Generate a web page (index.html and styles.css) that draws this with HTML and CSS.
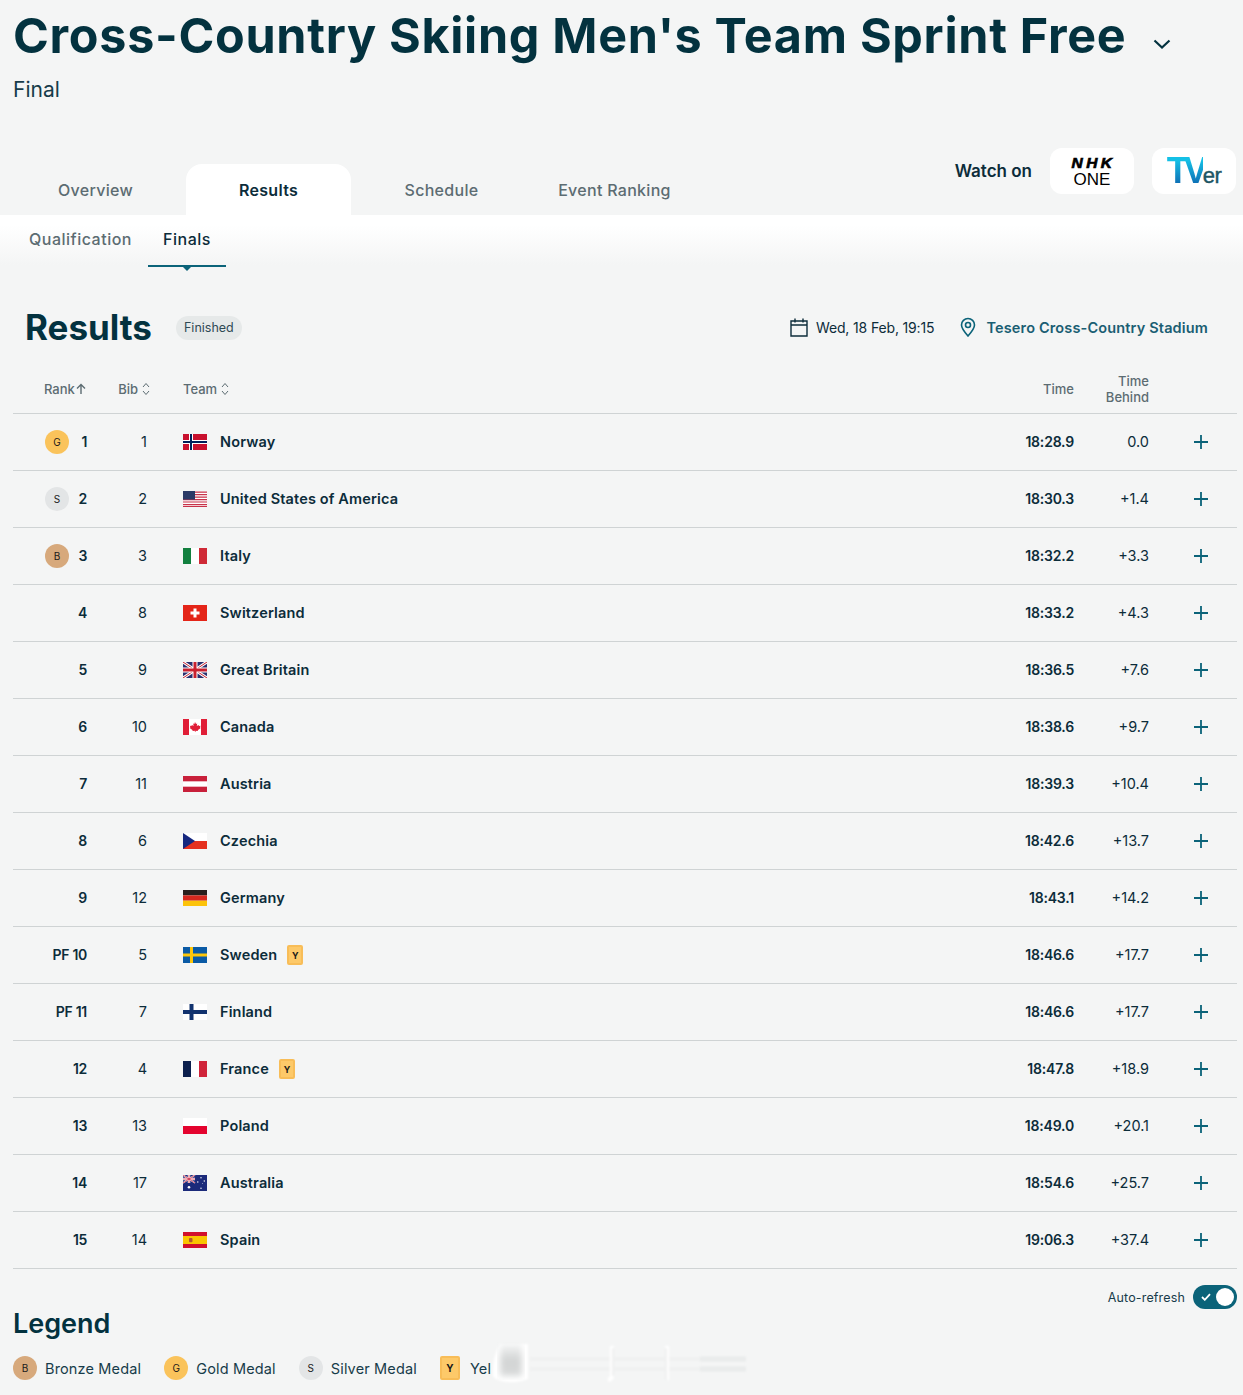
FILE: index.html
```html
<!DOCTYPE html>
<html>
<head>
<meta charset="utf-8">
<title>Cross-Country Skiing Men's Team Sprint Free</title>
<link rel="stylesheet" href="styles.css">
</head>
<body>

<header class="event-head">
  <div class="title-row">
    <h1>Cross-Country Skiing Men's Team Sprint Free</h1>
    <svg class="caret" viewBox="0 0 18 10"><path d="M1.5 1.5 9 8.5l7.5-7"/></svg>
  </div>
  <div class="phase">Final</div>
</header>

<div class="tabs-row">
  <nav class="tabs">
    <a class="tab">Overview</a>
    <a class="tab active">Results</a>
    <a class="tab">Schedule</a>
    <a class="tab">Event Ranking</a>
  </nav>
  <div class="watch">
    <span class="watch-label">Watch on</span>
    <a class="broadcaster nhk"><b>NHK</b><span>ONE</span></a>
    <a class="broadcaster tver"><span class="tv">TV</span><span class="er">er</span></a>
  </div>
</div>

<div class="subtabs-wrap">
  <nav class="subtabs">
    <a class="subtab">Qualification</a>
    <a class="subtab active">Finals</a>
  </nav>
</div>

<section class="results">
  <div class="results-head">
    <h2>Results</h2>
    <span class="badge">Finished</span>
    <div class="meta">
      <svg class="cal" viewBox="0 0 18 20"><path d="M1 4h16v15H1zM1 8h16M5 1.500v4M13 1.500v4"/></svg>
      <span class="date">Wed, 18 Feb, 19:15</span>
      <svg class="pin" viewBox="0 0 16 20"><path d="M8 19C4 14.500 1.500 11.500 1.500 8a6.500 6.500 0 0 1 13 0c0 3.500-2.500 6.500-6.500 11z"/><circle cx="8" cy="8" r="2.500"/></svg>
      <a class="venue">Tesero Cross-Country Stadium</a>
    </div>
  </div>

  <div class="row row-head">
    <div class="c-rank"><span class="th-rank">Rank<svg class="sort-up" viewBox="0 0 10 12"><path d="M5 11V1.500M1 5.500l4-4 4 4"/></svg></span></div>
    <div class="c-bib">Bib<svg class="sort" viewBox="0 0 8 14"><path d="M1 5l3-3.500L7 5M1 9l3 3.500L7 9"/></svg></div>
    <div class="c-team">Team<svg class="sort" viewBox="0 0 8 14"><path d="M1 5l3-3.500L7 5M1 9l3 3.500L7 9"/></svg></div>
    <div class="c-time">Time</div>
    <div class="c-behind">Time<br>Behind</div>
    <div class="c-more"></div>
  </div>

  <div class="row">
    <div class="c-rank"><span class="medal gold">G</span><span class="num">1</span></div>
    <div class="c-bib">1</div>
    <div class="c-team">
      <svg class="flag" viewBox="0 0 24 16"><rect width="24" height="16" fill="#c8102e"/><path d="M8 0v16M0 8h24" stroke="#fff" stroke-width="4"/><path d="M8 0v16M0 8h24" stroke="#00205b" stroke-width="2"/></svg>
      <span class="name">Norway</span>
    </div>
    <div class="c-time">18:28.9</div>
    <div class="c-behind">0.0</div>
    <div class="c-more"><svg class="plus" viewBox="0 0 16 16"><path d="M8 1v14M1 8h14"/></svg></div>
  </div>

  <div class="row">
    <div class="c-rank"><span class="medal silver">S</span><span class="num">2</span></div>
    <div class="c-bib">2</div>
    <div class="c-team">
      <svg class="flag" viewBox="0 0 24 16"><rect width="24" height="16" fill="#fff"/><path d="M0 1.200h24M0 3.700h24M0 6.100h24M0 8.600h24M0 11h24M0 13.500h24M0 15.400h24" stroke="#c8324a" stroke-width="1.200"/><rect width="12" height="8.600" fill="#2b3a67"/></svg>
      <span class="name">United States of America</span>
    </div>
    <div class="c-time">18:30.3</div>
    <div class="c-behind">+1.4</div>
    <div class="c-more"><svg class="plus" viewBox="0 0 16 16"><path d="M8 1v14M1 8h14"/></svg></div>
  </div>

  <div class="row">
    <div class="c-rank"><span class="medal bronze">B</span><span class="num">3</span></div>
    <div class="c-bib">3</div>
    <div class="c-team">
      <svg class="flag" viewBox="0 0 24 16"><rect width="8" height="16" fill="#12803f"/><rect x="8" width="8" height="16" fill="#fff"/><rect x="16" width="8" height="16" fill="#cf2a36"/></svg>
      <span class="name">Italy</span>
    </div>
    <div class="c-time">18:32.2</div>
    <div class="c-behind">+3.3</div>
    <div class="c-more"><svg class="plus" viewBox="0 0 16 16"><path d="M8 1v14M1 8h14"/></svg></div>
  </div>

  <div class="row">
    <div class="c-rank"><span class="num">4</span></div>
    <div class="c-bib">8</div>
    <div class="c-team">
      <svg class="flag" viewBox="0 0 24 16"><rect width="24" height="16" fill="#e42518"/><path d="M12 3.500v9M7.500 8h9" stroke="#fff" stroke-width="3"/></svg>
      <span class="name">Switzerland</span>
    </div>
    <div class="c-time">18:33.2</div>
    <div class="c-behind">+4.3</div>
    <div class="c-more"><svg class="plus" viewBox="0 0 16 16"><path d="M8 1v14M1 8h14"/></svg></div>
  </div>

  <div class="row">
    <div class="c-rank"><span class="num">5</span></div>
    <div class="c-bib">9</div>
    <div class="c-team">
      <svg class="flag" viewBox="0 0 24 16"><rect width="24" height="16" fill="#2a2f6e"/><path d="M0 0l24 16M24 0L0 16" stroke="#fff" stroke-width="3"/><path d="M0 0l24 16M24 0L0 16" stroke="#c8202f" stroke-width="1"/><path d="M12 0v16M0 8h24" stroke="#fff" stroke-width="5"/><path d="M12 0v16M0 8h24" stroke="#c8202f" stroke-width="3"/></svg>
      <span class="name">Great Britain</span>
    </div>
    <div class="c-time">18:36.5</div>
    <div class="c-behind">+7.6</div>
    <div class="c-more"><svg class="plus" viewBox="0 0 16 16"><path d="M8 1v14M1 8h14"/></svg></div>
  </div>

  <div class="row">
    <div class="c-rank"><span class="num">6</span></div>
    <div class="c-bib">10</div>
    <div class="c-team">
      <svg class="flag" viewBox="0 0 24 16"><rect width="24" height="16" fill="#fff"/><rect width="6" height="16" fill="#e01e37"/><rect x="18" width="6" height="16" fill="#e01e37"/><path d="M12 3l1 2 1.200-.500-.400 2.500 1.700-1 .500 1 1.500-.200-.500 1.700.700.500-2.700 2-.300 1-2.200-.300V13h-.600v-1.300l-2.200.300-.300-1-2.700-2 .700-.500-.500-1.700 1.500.200.500-1 1.700 1-.400-2.500 1.200.500z" fill="#e01e37"/></svg>
      <span class="name">Canada</span>
    </div>
    <div class="c-time">18:38.6</div>
    <div class="c-behind">+9.7</div>
    <div class="c-more"><svg class="plus" viewBox="0 0 16 16"><path d="M8 1v14M1 8h14"/></svg></div>
  </div>

  <div class="row">
    <div class="c-rank"><span class="num">7</span></div>
    <div class="c-bib">11</div>
    <div class="c-team">
      <svg class="flag" viewBox="0 0 24 16"><rect width="24" height="16" fill="#c8203a"/><rect y="5.330" width="24" height="5.340" fill="#fff"/></svg>
      <span class="name">Austria</span>
    </div>
    <div class="c-time">18:39.3</div>
    <div class="c-behind">+10.4</div>
    <div class="c-more"><svg class="plus" viewBox="0 0 16 16"><path d="M8 1v14M1 8h14"/></svg></div>
  </div>

  <div class="row">
    <div class="c-rank"><span class="num">8</span></div>
    <div class="c-bib">6</div>
    <div class="c-team">
      <svg class="flag" viewBox="0 0 24 16"><rect width="24" height="8" fill="#fff"/><rect y="8" width="24" height="8" fill="#e5301f"/><path d="M0 0l12 8L0 16z" fill="#15277f"/></svg>
      <span class="name">Czechia</span>
    </div>
    <div class="c-time">18:42.6</div>
    <div class="c-behind">+13.7</div>
    <div class="c-more"><svg class="plus" viewBox="0 0 16 16"><path d="M8 1v14M1 8h14"/></svg></div>
  </div>

  <div class="row">
    <div class="c-rank"><span class="num">9</span></div>
    <div class="c-bib">12</div>
    <div class="c-team">
      <svg class="flag" viewBox="0 0 24 16"><rect width="24" height="5.400" fill="#2a1f1c"/><rect y="5.400" width="24" height="5.300" fill="#d6281e"/><rect y="10.700" width="24" height="5.300" fill="#fcc30b"/></svg>
      <span class="name">Germany</span>
    </div>
    <div class="c-time">18:43.1</div>
    <div class="c-behind">+14.2</div>
    <div class="c-more"><svg class="plus" viewBox="0 0 16 16"><path d="M8 1v14M1 8h14"/></svg></div>
  </div>

  <div class="row">
    <div class="c-rank"><span class="num">PF 10</span></div>
    <div class="c-bib">5</div>
    <div class="c-team">
      <svg class="flag" viewBox="0 0 24 16"><rect width="24" height="16" fill="#0a5aa5"/><path d="M8.500 0v16M0 8h24" stroke="#fdc60a" stroke-width="3"/></svg>
      <span class="name">Sweden</span>
      <span class="card">Y</span>
    </div>
    <div class="c-time">18:46.6</div>
    <div class="c-behind">+17.7</div>
    <div class="c-more"><svg class="plus" viewBox="0 0 16 16"><path d="M8 1v14M1 8h14"/></svg></div>
  </div>

  <div class="row">
    <div class="c-rank"><span class="num">PF 11</span></div>
    <div class="c-bib">7</div>
    <div class="c-team">
      <svg class="flag" viewBox="0 0 24 16"><rect width="24" height="16" fill="#fff"/><path d="M8.500 0v16M0 8h24" stroke="#12336f" stroke-width="4"/></svg>
      <span class="name">Finland</span>
    </div>
    <div class="c-time">18:46.6</div>
    <div class="c-behind">+17.7</div>
    <div class="c-more"><svg class="plus" viewBox="0 0 16 16"><path d="M8 1v14M1 8h14"/></svg></div>
  </div>

  <div class="row">
    <div class="c-rank"><span class="num">12</span></div>
    <div class="c-bib">4</div>
    <div class="c-team">
      <svg class="flag" viewBox="0 0 24 16"><rect width="8" height="16" fill="#0c1f4d"/><rect x="8" width="8" height="16" fill="#fff"/><rect x="16" width="8" height="16" fill="#d0243a"/></svg>
      <span class="name">France</span>
      <span class="card">Y</span>
    </div>
    <div class="c-time">18:47.8</div>
    <div class="c-behind">+18.9</div>
    <div class="c-more"><svg class="plus" viewBox="0 0 16 16"><path d="M8 1v14M1 8h14"/></svg></div>
  </div>

  <div class="row">
    <div class="c-rank"><span class="num">13</span></div>
    <div class="c-bib">13</div>
    <div class="c-team">
      <svg class="flag" viewBox="0 0 24 16"><rect width="24" height="8" fill="#fff"/><rect y="8" width="24" height="8" fill="#e4032e"/></svg>
      <span class="name">Poland</span>
    </div>
    <div class="c-time">18:49.0</div>
    <div class="c-behind">+20.1</div>
    <div class="c-more"><svg class="plus" viewBox="0 0 16 16"><path d="M8 1v14M1 8h14"/></svg></div>
  </div>

  <div class="row">
    <div class="c-rank"><span class="num">14</span></div>
    <div class="c-bib">17</div>
    <div class="c-team">
      <svg class="flag" viewBox="0 0 24 16"><rect width="24" height="16" fill="#1b2a7a"/><path d="M0 0l12 8M12 0L0 8" stroke="#fff" stroke-width="1.500"/><path d="M6 0v8M0 4h12" stroke="#fff" stroke-width="2.500"/><path d="M6 0v8M0 4h12M0 0l12 8M12 0L0 8" stroke="#d0304a" stroke-width=".8"/><circle cx="6" cy="12.300" r="1.300" fill="#fff"/><circle cx="18" cy="2.800" r=".7" fill="#fff"/><circle cx="18" cy="13.300" r=".7" fill="#fff"/><circle cx="14.800" cy="7" r=".7" fill="#fff"/><circle cx="21.300" cy="6" r=".7" fill="#fff"/><circle cx="19.600" cy="8.500" r=".4" fill="#fff"/></svg>
      <span class="name">Australia</span>
    </div>
    <div class="c-time">18:54.6</div>
    <div class="c-behind">+25.7</div>
    <div class="c-more"><svg class="plus" viewBox="0 0 16 16"><path d="M8 1v14M1 8h14"/></svg></div>
  </div>

  <div class="row">
    <div class="c-rank"><span class="num">15</span></div>
    <div class="c-bib">14</div>
    <div class="c-team">
      <svg class="flag" viewBox="0 0 24 16"><rect width="24" height="16" fill="#d2102c"/><rect y="4" width="24" height="8" fill="#fac400"/><rect x="6" y="6" width="3.500" height="4.200" rx="1" fill="#b5562a"/></svg>
      <span class="name">Spain</span>
    </div>
    <div class="c-time">19:06.3</div>
    <div class="c-behind">+37.4</div>
    <div class="c-more"><svg class="plus" viewBox="0 0 16 16"><path d="M8 1v14M1 8h14"/></svg></div>
  </div>

  <div class="refresh">
    <span>Auto-refresh</span>
    <span class="toggle">
      <svg class="check" viewBox="0 0 10 8"><path d="M1 4l2.800 2.800L9 1.200"/></svg>
      <span class="knob"></span>
    </span>
  </div>
</section>

<footer class="legend">
  <h3>Legend</h3>
  <div class="legend-items">
    <div class="legend-item"><span class="medal bronze">B</span>Bronze Medal</div>
    <div class="legend-item"><span class="medal gold">G</span>Gold Medal</div>
    <div class="legend-item"><span class="medal silver">S</span>Silver Medal</div>
    <div class="legend-item"><span class="card big">Y</span>Yel</div>
  </div>
  <svg class="smudge" viewBox="0 0 270 44">
    <defs>
      <filter id="soft"><feGaussianBlur stdDeviation="1"/></filter>
      <filter id="softer"><feGaussianBlur stdDeviation="3"/></filter>
      <linearGradient id="fade" x1="0" y1="0" x2="0" y2="1">
        <stop offset="0" stop-color="#f4f5f5"/>
        <stop offset=".5" stop-color="#d2d4d4"/>
        <stop offset="1" stop-color="#d8dada"/>
      </linearGradient>
    </defs>
    <path d="M3 28v6c4 7 24 8 35 3V2L10 2C5 10 3 20 3 28z" fill="#fff" filter="url(#soft)"/>
    <rect x="10" y="2" width="22" height="32" fill="url(#fade)" filter="url(#softer)"/>
    <g filter="url(#soft)">
      <path d="M40 17h170M40 27h170" stroke="#f0f1f1" stroke-width="4"/>
      <path d="M210 17h46M210 27h46" stroke="#e9ebeb" stroke-width="5"/>
      <path d="M122 4v30q0 3-4 4" fill="none" stroke="#fff" stroke-width="4"/>
      <path d="M123 6v28" stroke="#dfe1e1" stroke-width="1"/>
      <path d="M177 4v34" stroke="#fff" stroke-width="4"/>
      <path d="M176 6v32" stroke="#dfe1e1" stroke-width="1"/>
    </g>
  </svg>
</footer>

</body>
</html>
```

FILE: styles.css
```css
* {
  box-sizing: border-box;
}

body {
  margin: 0;
  background: #f4f5f5;
  color: #0c2c3a;
  font-family: Inter, "Liberation Sans", sans-serif;
  font-size: 14.5px;
  height: 1395px;
  overflow: hidden;
}

/* Event title */
.event-head {
  padding: 8px 13px 0;
}

.title-row {
  display: flex;
  align-items: center;
}

h1 {
  margin: 0;
  font-size: 48.5px;
  font-weight: 700;
  line-height: 56px;
  color: #03323f;
  letter-spacing: 0.7px;
  white-space: nowrap;
}

.caret {
  width: 18px;
  height: 10px;
  margin: 16px 0 0 27px;
  fill: none;
  stroke: #03323f;
  stroke-width: 2.2;
}

.phase {
  margin-top: 12px;
  font-size: 21px;
  line-height: 28px;
  color: #173c4a;
}

/* Main tabs */
.tabs-row {
  display: flex;
  justify-content: space-between;
  align-items: flex-start;
  padding: 0 7px 0 13px;
  height: 67px;
  margin-top: 44px;
}

.tabs {
  display: flex;
  gap: 8px;
  margin-top: 16px;
}

.tab {
  width: 165px;
  height: 51px;
  display: flex;
  align-items: center;
  justify-content: center;
  padding-top: 1px;
  font-size: 16px;
  font-weight: 500;
  letter-spacing: 0.3px;
  color: #5c6c72;
  border-radius: 16px 16px 0 0;
}

.tab.active {
  background: #fff;
  color: #0c2c3a;
  font-weight: 600;
}

.watch {
  display: flex;
  align-items: center;
  gap: 18px;
}

.watch-label {
  font-size: 17px;
  font-weight: 600;
  color: #0c2c3a;
}

.broadcaster {
  width: 84px;
  height: 46px;
  background: #fff;
  border-radius: 12px;
  display: flex;
  flex-direction: column;
  align-items: center;
  justify-content: center;
  color: #000;
  font-family: "Liberation Sans", sans-serif;
}

.nhk b {
  font-size: 15.5px;
  line-height: 15px;
  font-style: italic;
  font-weight: 700;
  letter-spacing: 3.5px;
  margin-right: -3px;
  -webkit-text-stroke: 0.7px #000;
}

.nhk span {
  margin-top: 1px;
  font-size: 17px;
  line-height: 17px;
}

.tver {
  flex-direction: row;
  align-items: baseline;
  padding-top: 5px;
}

.tv {
  font-size: 36px;
  line-height: 36px;
  font-weight: 700;
  letter-spacing: -5px;
  background: linear-gradient(#14c0e6 20%, #0e6fb5 85%);
  -webkit-background-clip: text;
  background-clip: text;
  color: transparent;
}

.er {
  margin-left: 0;
  font-size: 22px;
  color: #1d5564;
  letter-spacing: -0.5px;
  -webkit-text-stroke: 0.4px #1d5564;
}

/* Sub tabs */
.subtabs-wrap {
  height: 53px;
  background: linear-gradient(#fff 10px, #f4f5f5 50px);
}

.subtabs {
  display: flex;
  padding-left: 13px;
}

.subtab {
  position: relative;
  height: 52px;
  display: flex;
  align-items: center;
  padding: 0 16px 2px;
  border-bottom: 2px solid transparent;
  font-size: 16px;
  font-weight: 500;
  letter-spacing: 0.5px;
  color: #5c6c72;
}

.subtab.active {
  color: #0c2c3a;
  width: 78px;
  justify-content: center;
  border-bottom-color: #0b6379;
}

.subtab.active::after {
  content: "";
  position: absolute;
  left: 50%;
  bottom: -6px;
  margin-left: -4px;
  border: 4px solid transparent;
  border-top: 4px solid #0b6379;
  border-bottom: 0;
}

/* Results */
.results {
  padding: 0 6px 0 13px;
}

.results-head {
  display: flex;
  align-items: center;
  height: 80px;
  margin-top: 20px;
  padding: 0 29px 0 12px;
}

h2 {
  margin: 0 0 2px;
  font-size: 35px;
  font-weight: 700;
  color: #03323f;
  line-height: 40px;
}

.badge {
  margin-left: 24px;
  padding: 0 8px;
  height: 24px;
  line-height: 24px;
  border-radius: 12px;
  background: #e6e9e9;
  font-size: 12.5px;
  color: #2f4a55;
}

.meta {
  margin-left: auto;
  margin-bottom: 2px;
  display: flex;
  align-items: center;
}

.cal {
  width: 18px;
  height: 20px;
  fill: none;
  stroke: #0c2c3a;
  stroke-width: 1.4;
}

.date {
  margin-left: 8px;
  font-size: 14px;
  letter-spacing: -0.15px;
  color: #0c2c3a;
}

.pin {
  width: 16px;
  height: 20px;
  margin-left: 26px;
  fill: none;
  stroke: #0b6379;
  stroke-width: 1.6;
}

.venue {
  margin-left: 10px;
  font-size: 14.5px;
  font-weight: 600;
  letter-spacing: 0.15px;
  color: #1a5e73;
}

/* Table rows */
.row {
  display: grid;
  grid-template-columns: 74px 60px 1fr 75px 75px 88px;
  align-items: center;
  height: 57px;
  border-bottom: 1px solid #cfd3d4;
  font-weight: 500;
}

.row-head {
  height: 46px;
  padding-bottom: 2px;
  font-size: 13px;
  line-height: 16px;
  color: #5c6c72;
}

.row-head > div {
  margin-bottom: 2px;
}

/* text sits a pixel above the flag and plus centre */
.num,
.name,
.c-bib,
.c-time,
.c-behind {
  margin-bottom: 2px;
}

.c-rank {
  display: flex;
  align-items: center;
  justify-content: flex-end;
  position: relative;
  font-size: 14px;
  font-weight: 600;
  letter-spacing: -0.3px;
}

.row-head .c-rank {
  justify-content: flex-start;
  padding-left: 31px;
  font-size: 13px;
  font-weight: 500;
  letter-spacing: 0;
}

.th-rank {
  display: flex;
  align-items: center;
}

.c-rank .medal {
  position: absolute;
  left: 32px;
}

.c-bib {
  text-align: right;
  font-weight: 400;
}

.row-head .c-bib {
  display: flex;
  align-items: center;
  justify-content: flex-end;
  margin-right: -3px;
  font-weight: 500;
}

.c-team {
  display: flex;
  align-items: center;
  padding-left: 36px;
  font-weight: 600;
  letter-spacing: 0.15px;
}

.row-head .c-team {
  font-weight: 500;
  letter-spacing: 0;
}

.flag {
  width: 24px;
  height: 16px;
  margin-right: 13px;
  flex: none;
}

.c-time,
.c-behind {
  text-align: right;
}

.c-time {
  font-size: 14px;
  font-weight: 600;
  letter-spacing: -0.2px;
}

.row-head .c-time {
  font-size: 13px;
  font-weight: 500;
  letter-spacing: 0;
}

.c-behind {
  font-weight: 400;
}

.row-head .c-behind {
  font-weight: 500;
}

.c-more {
  padding-left: 44px;
  display: flex;
}

.plus {
  width: 16px;
  height: 16px;
  fill: none;
  stroke: #0b6379;
  stroke-width: 1.8;
}

.sort-up {
  width: 10px;
  height: 12px;
  margin-left: 1px;
  fill: none;
  stroke: #5c6c72;
  stroke-width: 1.4;
}

.sort {
  width: 8px;
  height: 14px;
  margin-left: 4px;
  fill: none;
  stroke: #5c6c72;
  stroke-width: 1;
}

.medal {
  width: 24px;
  height: 24px;
  border-radius: 50%;
  display: inline-flex;
  align-items: center;
  justify-content: center;
  font-size: 10px;
  font-weight: 400;
  letter-spacing: 0;
  color: #1a1a1a;
  flex: none;
}

.gold {
  background: #fac35b;
}

.silver {
  background: #e3e5e6;
}

.bronze {
  background: #d7a97c;
}

.card {
  width: 16px;
  height: 20px;
  margin-left: 10px;
  border: 2px solid #f8bd58;
  border-radius: 2px;
  background: #fdc969;
  display: inline-flex;
  align-items: center;
  justify-content: center;
  font-size: 9px;
  font-weight: 700;
  letter-spacing: 0;
  color: #1a1a1a;
}

.card.big {
  width: 20px;
  height: 24px;
  margin-left: 0;
  margin-right: 2px;
  font-size: 10px;
}

/* Auto refresh */
.refresh {
  display: flex;
  align-items: center;
  justify-content: flex-end;
  gap: 8px;
  margin-top: 16px;
  height: 24px;
  font-size: 12.5px;
  letter-spacing: 0.15px;
  color: #173c4a;
}

.toggle {
  position: relative;
  width: 44px;
  height: 24px;
  border-radius: 12px;
  background: #0b6379;
}

.knob {
  position: absolute;
  right: 3px;
  top: 3px;
  width: 18px;
  height: 18px;
  border-radius: 50%;
  background: #fff;
}

.check {
  position: absolute;
  left: 8px;
  top: 8px;
  width: 10px;
  height: 8px;
  fill: none;
  stroke: #fff;
  stroke-width: 1.8;
}

/* Legend */
.legend {
  position: relative;
  padding: 0 13px;
}

h3 {
  margin: 0;
  font-size: 27px;
  line-height: 30px;
  font-weight: 600;
  color: #03323f;
}

.legend-items {
  display: flex;
  gap: 23px;
  margin-top: 17px;
}

.legend-item {
  display: flex;
  align-items: center;
  gap: 8px;
  height: 24px;
  font-size: 14.5px;
  letter-spacing: 0.15px;
  color: #173c4a;
}

.smudge {
  position: absolute;
  left: 490px;
  top: 33px;
  width: 270px;
  height: 44px;
}
```
